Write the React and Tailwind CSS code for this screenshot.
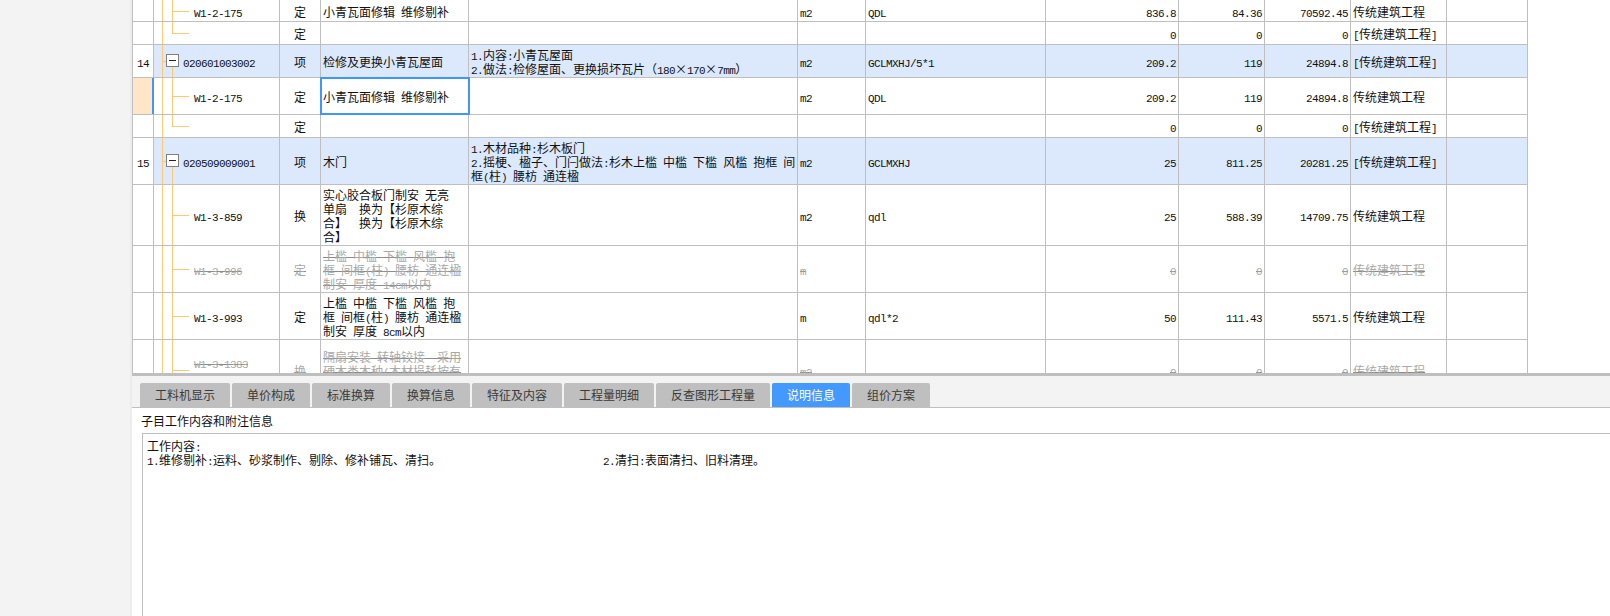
import { Fragment } from 'react'

const LINE = 'border-[#bfbfbf]'
const COLS = 'grid-cols-[21px_126px_41px_148px_329px_68px_180px_133px_86px_86px_96px_81px]'

const DOOR = '上槛 中槛 下槛 风槛 抱\n框 间框(柱) 腰枋 通连楹\n制安 厚度 '

const ROWS = [
  { h: 'h-[22px]', tree: 'child', code: 'W1-2-175', type: '定', name: '小青瓦面修辑 维修剔补', unit: 'm2', expr: 'QDL', qty: '836.8', price: '84.36', total: '70592.45', cat: '传统建筑工程' },
  { h: 'h-[23px]', tree: 'last', type: '定', qty: '0', price: '0', total: '0', cat: '[传统建筑工程]' },
  {
    h: 'h-[33px]', tree: 'parent', index: '14', code: '020601003002', type: '项', name: '检修及更换小青瓦屋面',
    desc: '1.内容:小青瓦屋面\n2.做法:检修屋面、更换损坏瓦片（180×170×7mm）',
    unit: 'm2', expr: 'GCLMXHJ/5*1', qty: '209.2', price: '119', total: '24894.8', cat: '[传统建筑工程]', blue: true,
  },
  { h: 'h-[37px]', tree: 'child', code: 'W1-2-175', type: '定', name: '小青瓦面修辑 维修剔补', unit: 'm2', expr: 'QDL', qty: '209.2', price: '119', total: '24894.8', cat: '传统建筑工程', selected: true },
  { h: 'h-[23px]', tree: 'last', type: '定', qty: '0', price: '0', total: '0', cat: '[传统建筑工程]' },
  {
    h: 'h-[47px]', tree: 'parent', index: '15', code: '020509009001', type: '项', name: '木门',
    desc: '1.木材品种:杉木板门\n2.摇梗、楹子、门闩做法:杉木上槛 中槛 下槛 风槛 抱框 间\n框(柱) 腰枋 通连楹',
    unit: 'm2', expr: 'GCLMXHJ', qty: '25', price: '811.25', total: '20281.25', cat: '[传统建筑工程]', blue: true,
  },
  { h: 'h-[61px]', tree: 'child', code: 'W1-3-859', type: '换', name: '实心胶合板门制安 无亮\n单扇  换为【杉原木综\n合】  换为【杉原木综\n合】', unit: 'm2', expr: 'qdl', qty: '25', price: '588.39', total: '14709.75', cat: '传统建筑工程' },
  { h: 'h-[47px]', tree: 'child', code: 'W1-3-996', type: '定', name: DOOR + '14cm以内', unit: 'm', qty: '0', price: '0', total: '0', cat: '传统建筑工程', off: true },
  { h: 'h-[47px]', tree: 'child', code: 'W1-3-993', type: '定', name: DOOR + '8cm以内', unit: 'm', expr: 'qdl*2', qty: '50', price: '111.43', total: '5571.5', cat: '传统建筑工程' },
  { h: 'h-[61px]', tree: 'child', code: 'W1-3-1383', codeClass: 'pb-[16px]', type: '换', name: '隔扇安装 转轴铰接  采用\n硬木类木种(木材损耗按有\n关规定计算）', unit: 'm2', qty: '0', price: '0', total: '0', cat: '传统建筑工程', off: true },
]

const TABS = [
  { label: '工料机显示', w: 'w-[90px]' },
  { label: '单价构成', w: 'w-[78px]' },
  { label: '标准换算', w: 'w-[78px]' },
  { label: '换算信息', w: 'w-[78px]' },
  { label: '特征及内容', w: 'w-[90px]' },
  { label: '工程量明细', w: 'w-[90px]' },
  { label: '反查图形工程量', w: 'w-[114px]' },
  { label: '说明信息', w: 'w-[78px]', active: true },
  { label: '组价方案', w: 'w-[78px]' },
]

// ascii is half width in the original font, so it gets its own run
function Txt({ children }) {
  if (!children) return null
  return (
    <div className="whitespace-pre leading-[14px]">
      {children.split('\n').map((line, i) => (
        <div key={i} className="h-[14px]">
          {line.split(/([\x20-\x7e]+)/).map((run, j) =>
            j % 2 ? (
              <span key={j} className="font-['Liberation_Mono',monospace] text-[11px] tracking-[-0.6px]">{run}</span>
            ) : (
              <Fragment key={j}>{run}</Fragment>
            )
          )}
        </div>
      ))}
    </div>
  )
}

function Tree({ kind }) {
  return (
    <>
      <div className="absolute left-[8px] top-0 bottom-0 w-px bg-[#ffc875]" />
      {kind === 'child' && <div className="absolute left-[18px] top-0 bottom-0 w-px bg-[#ffc875]" />}
      {kind === 'last' && <div className="absolute left-[18px] top-0 h-1/2 w-px bg-[#ffc875]" />}
      {kind !== 'parent' && <div className="absolute left-[18px] top-1/2 h-px w-[17px] bg-[#ffc875]" />}
      {kind === 'parent' && (
        <>
          <div className="absolute left-[18px] top-1/2 bottom-0 w-px bg-[#ffc875]" />
          <div className="absolute left-[8px] top-1/2 h-px w-[4px] bg-[#ffc875]" />
          <div className="absolute left-[12px] top-1/2 -mt-[7px] flex h-[13px] w-[13px] items-center justify-center border border-[#808080] bg-white">
            <div className="h-px w-[7px] bg-[#222]" />
          </div>
        </>
      )}
    </>
  )
}

function Row({ row }) {
  const cell = `flex items-center border-r ${LINE} pt-[2px] ${row.blue ? 'bg-[#dce9fd]' : ''}`
  // the font's own strike sits too low on cjk glyphs, so it is an underline pulled up to mid height
  const struck = 'text-[#a8a8a8] underline decoration-[#8c8c8c] underline-offset-[-4px] [text-decoration-skip-ink:none]'
  return (
    <div className={`grid ${COLS} ${row.h} border-b ${LINE} ${row.off ? struck : 'text-[#111]'}`}>
      <div className={`flex items-center justify-center pt-[2px] ${row.selected ? 'border-r-2 border-r-[#4096ff] bg-[#ffe6c8]' : `border-r ${LINE}`}`}>
        <Txt>{row.index}</Txt>
      </div>
      <div className={`${cell} relative ${row.tree === 'parent' ? 'pl-[29px]' : 'pl-[40px]'} ${row.codeClass || ''}`}>
        <Tree kind={row.tree} />
        <Txt>{row.code}</Txt>
      </div>
      <div className={`${cell} justify-center`}><Txt>{row.type}</Txt></div>
      <div className={`${cell} pl-[2px] ${row.selected ? 'relative outline-2 -outline-offset-1 outline-[#4096ff]' : ''}`}><Txt>{row.name}</Txt></div>
      <div className={`${cell} pl-[2px]`}><Txt>{row.desc}</Txt></div>
      <div className={`${cell} pl-[2px]`}><Txt>{row.unit}</Txt></div>
      <div className={`${cell} pl-[2px]`}><Txt>{row.expr}</Txt></div>
      <div className={`${cell} justify-end pr-[2px]`}><Txt>{row.qty}</Txt></div>
      <div className={`${cell} justify-end pr-[2px]`}><Txt>{row.price}</Txt></div>
      <div className={`${cell} justify-end pr-[2px]`}><Txt>{row.total}</Txt></div>
      <div className={`${cell} pl-[2px]`}><Txt>{row.cat}</Txt></div>
      <div className={cell} />
    </div>
  )
}

export default function App() {
  return (
    <div className="flex h-[616px] w-[1610px] overflow-hidden bg-white font-['Noto_Sans_CJK_SC',sans-serif] text-[12px] leading-[14px]">
      <div className="w-[132px] shrink-0 border-r-2 border-[#ececec] bg-[#f3f3f3]" />

      <div className="flex min-w-0 flex-1 flex-col">
        <div className="h-[373px] shrink-0 overflow-hidden">
          <div className={`w-fit border-l ${LINE}`}>
            {ROWS.map((row, i) => <Row key={i} row={row} />)}
          </div>
        </div>
        <div className="h-[3px] shrink-0 bg-[#bfbfbf]" />

        <div className={`flex h-[32px] shrink-0 items-end gap-[2px] border-b ${LINE} bg-[#f3f3f3] pl-[8px]`}>
          {TABS.map(tab => (
            <div
              key={tab.label}
              className={`flex h-[24px] items-center justify-center rounded-t-[2px] ${tab.w} ${tab.active ? 'bg-[#4499ff] text-white' : 'bg-[#bfbfbf] text-[#3a3a3a]'}`}
            >
              {tab.label}
            </div>
          ))}
        </div>

        <div className="flex h-[25px] shrink-0 items-center pl-[9px] text-[#111]">子目工作内容和附注信息</div>

        <div className={`ml-[10px] flex-1 border-l border-t ${LINE} pl-[4px] pt-[5px] text-[#111]`}>
          <Txt>工作内容:</Txt>
          <div className="flex">
            <div className="w-[456px]"><Txt>1.维修剔补:运料、砂浆制作、剔除、修补铺瓦、清扫。</Txt></div>
            <Txt>2.清扫:表面清扫、旧料清理。</Txt>
          </div>
        </div>
      </div>
    </div>
  )
}
